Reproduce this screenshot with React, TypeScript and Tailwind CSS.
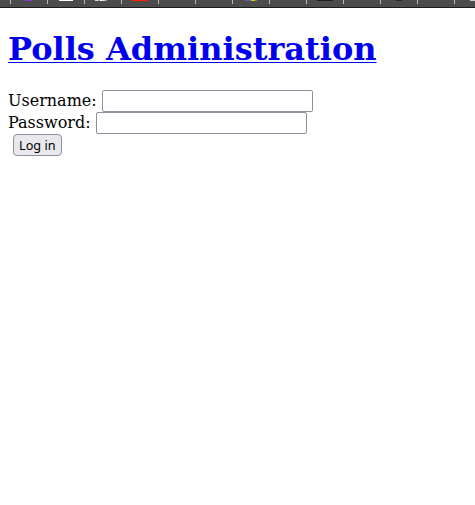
import type { ReactNode } from "react";

const tabs: ReactNode[] = [
  <path key="a" d="M15 0H22V1H15Z" fill="#9333d6" />,
  <path key="b" d="M12 0H26V1H12Z" fill="#fff" />,
  <g key="c">
    <path d="M11 0H14V1H11ZM18 0H21V1H18Z" fill="#ddd" />
    <path d="M14 0H16V1H14ZM21 0H23V1H21Z" fill="#999" />
    <path d="M16 0H18V1H16Z" fill="#fff" />
  </g>,
  <path key="d" d="M11 0H27V1H11Z" fill="#ff2200" />,
  null,
  null,
  <g key="g">
    <path d="M13 0H15V1H13Z" fill="#e23b3b" />
    <path d="M15 0H19V1H15Z" fill="#1a73e8" />
    <path d="M19 0H23V1H19Z" fill="#fbbc04" />
    <path d="M23 0H25V1H23Z" fill="#5aa02c" />
  </g>,
  null,
  <path key="i" d="M11 0H27V1H11Z" fill="#1f1f1f" />,
  null,
  <path key="k" d="M16 0H22V1H16Z" fill="#22223a" />,
  null,
  <path key="m" d="M16 0H22V1H16Z" fill="#ccc" />,
];

function TabStrip() {
  return (
    <div className="flex h-2 overflow-hidden border-b border-[#1c1b1c] bg-[#4c4c4c] pl-[10px]">
      {tabs.map((icon, i) => (
        <div key={i} className="flex w-[37px] shrink-0">
          <span className="h-1 w-px shrink-0 bg-[#b8b8b8]" />
          <svg width="36" height="2" viewBox="1 0 36 2" shapeRendering="crispEdges" className="shrink-0">
            {icon}
          </svg>
        </div>
      ))}
    </div>
  );
}

export default function App() {
  return (
    <div className="min-h-screen overflow-hidden bg-white font-['DejaVu_Serif',serif] text-base text-black">
      <TabStrip />
      <main className="px-2 pt-[22px]">
        <h1 className="h-[38px] text-[32px] leading-[38px] font-bold whitespace-nowrap">
          <a href="#" className="text-[#0000ee] underline decoration-1 underline-offset-2 [text-decoration-skip-ink:none]">
            Polls Administration
          </a>
        </h1>
        <form className="pt-[22px]" onSubmit={(e) => e.preventDefault()}>
          <div className="flex h-[22px] items-center">
            <label htmlFor="username" className="w-[94px] leading-[22px] whitespace-nowrap">Username:</label>
            <input id="username" type="text" className="h-[22px] w-[211px] rounded-[2px] border border-[#8f8f9d] bg-white px-1" />
          </div>
          <div className="flex h-[22px] items-center">
            <label htmlFor="password" className="w-[88px] leading-[22px] whitespace-nowrap">Password:</label>
            <input id="password" type="password" className="h-[22px] w-[211px] rounded-[2px] border border-[#8f8f9d] bg-white px-1" />
          </div>
          <button
            type="submit"
            className="ml-[5px] flex h-[22px] w-[49px] items-center rounded-[4px] border border-[#8f8f9d] bg-[#e9e9ed] pt-px pl-[5px] font-['Noto_Sans',sans-serif] text-[12.7px] leading-[21px] whitespace-nowrap"
          >
            Log in
          </button>
        </form>
      </main>
    </div>
  );
}
